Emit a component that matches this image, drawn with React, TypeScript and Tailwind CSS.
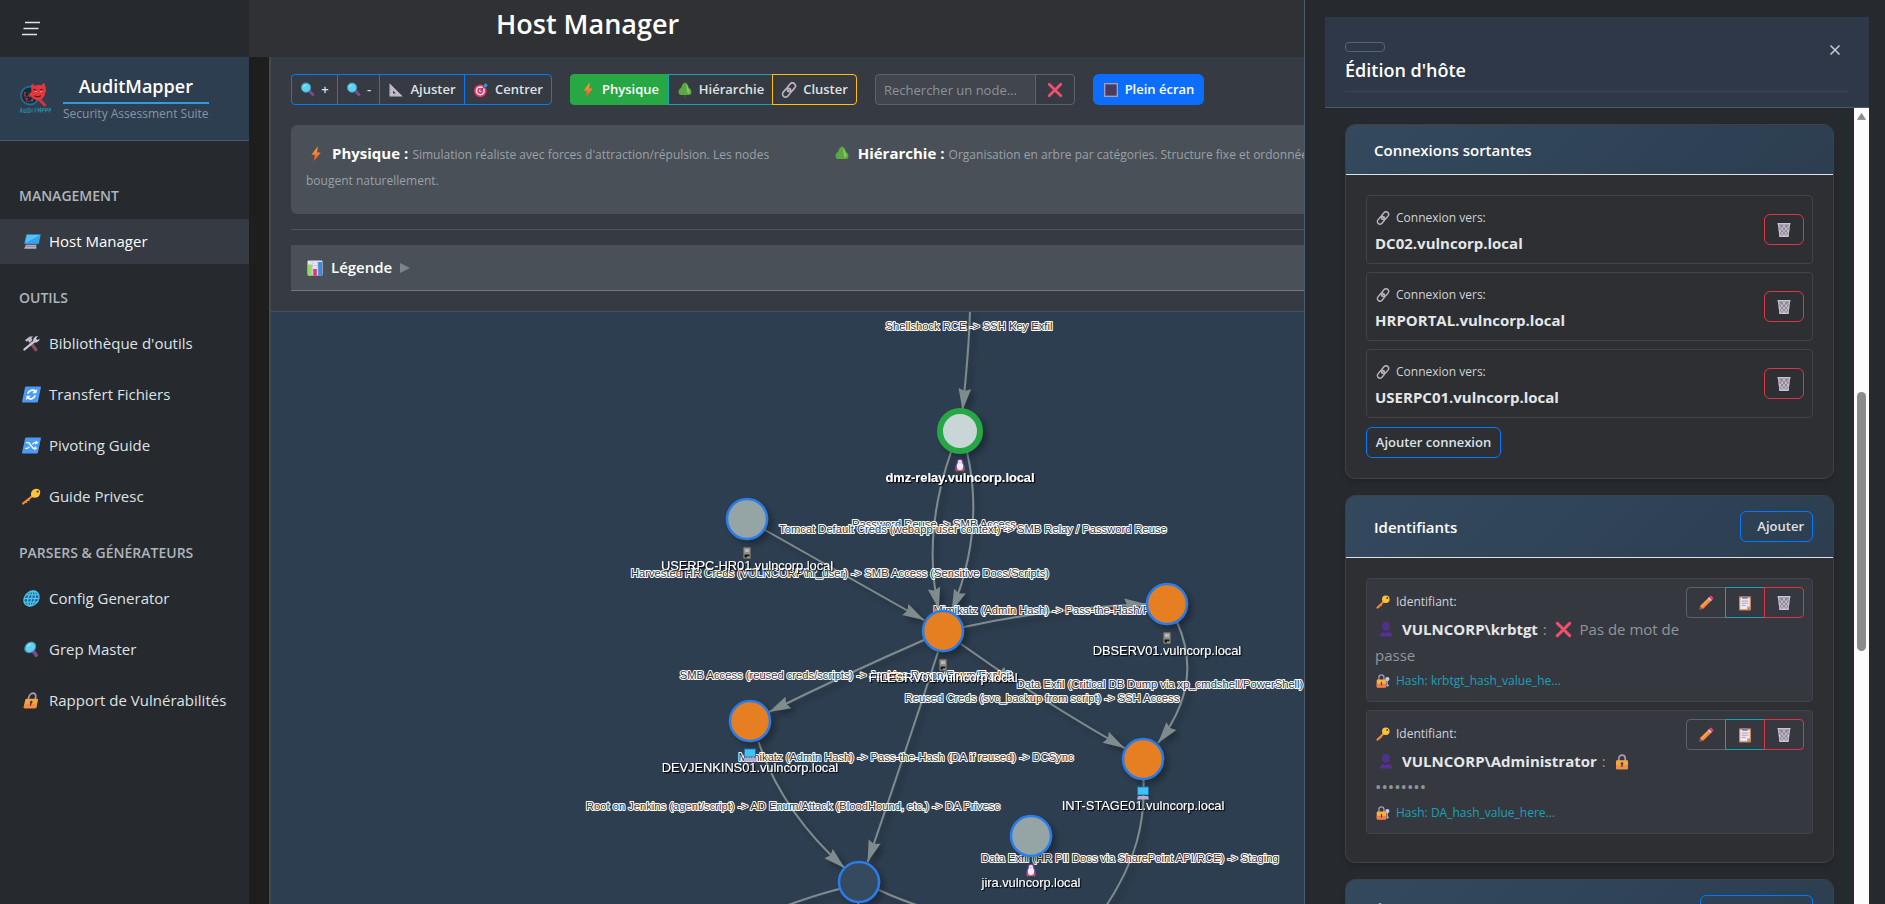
import React from "react";

type IconProps = { className?: string };

function Svg({ className = "size-4", children }: { className?: string; children: React.ReactNode }) {
  return (
    <svg viewBox="0 0 16 16" className={`${className} shrink-0`} fill="none" aria-hidden="true">
      {children}
    </svg>
  );
}

const Magnifier = ({ className }: IconProps) => (
  <Svg className={className}>
    <path d="M9.6 9.2l4.2 4.4" stroke="#7b4a8c" strokeWidth="3.2" strokeLinecap="round" />
    <circle cx="6.4" cy="6" r="5" fill="#5fd0ee" stroke="#3d8fb5" strokeWidth="1" />
    <path d="M3.8 5.2a2.8 2.8 0 0 1 2.4-2" stroke="#a9ecfb" strokeWidth="1" strokeLinecap="round" />
  </Svg>
);
const SetSquare = ({ className }: IconProps) => (
  <Svg className={className}>
    <path d="M1.5 1.2v13.3h13.3zM5 8.6l3 3H5z" fill="#c3bccb" fillRule="evenodd" />
    <path d="M1.5 4.5h1.4M1.5 7.5h1.4M1.5 10.5h1.4M6 14.4v-1.2M9 14.4v-1.2" stroke="#8d8598" strokeWidth=".7" />
  </Svg>
);
const Target = ({ className }: IconProps) => (
  <Svg className={className}>
    <circle cx="7.3" cy="8.8" r="6.4" fill="#e8315f" />
    <circle cx="7.3" cy="8.8" r="4.6" fill="#f5e9f1" />
    <circle cx="7.3" cy="8.8" r="3.1" fill="#e8315f" />
    <circle cx="7.3" cy="8.8" r="1.3" fill="#f5e9f1" />
    <path d="M7.3 8.8l5-5" stroke="#245fa6" strokeWidth="1.1" />
    <path d="M11 5V2.8L13.2.8v2h2l-2 2.2z" fill="#2b9bf0" />
  </Svg>
);
const Bolt = ({ className }: IconProps) => (
  <Svg className={className}>
    <defs>
      <linearGradient id="bolt" x1="0" y1="0" x2="0" y2="1">
        <stop offset="0" stopColor="#ffb02e" />
        <stop offset="1" stopColor="#f4442e" />
      </linearGradient>
    </defs>
    <path d="M9.8.5L3.4 8.8h3.5l-1.2 6.7 7-9H9z" fill="url(#bolt)" />
  </Svg>
);
const Tree = ({ className }: IconProps) => (
  <Svg className={className}>
    <path d="M7.3 11h1.6v4.6H7.3z" fill="#7a3b40" />
    <path d="M8 .6c2 .9 3.400 2.900 3.800 5.200 2.200 1.200 3.200 3.700 2.500 5.500-.5 1.300-1.500 1.800-2.800 1.800H4.500c-1.300 0-2.300-.5-2.800-1.800-.7-1.800.3-4.300 2.500-5.500C4.600 3.500 6 1.500 8 .6z" fill="#5ba843" />
    <path d="M9 2c1.300 1 2 2.800 2.100 4.500 1.800 1.200 2 4.500-.1 5.200C9.500 9 9.800 5.500 9 2z" fill="#85cf52" />
  </Svg>
);
const Link = ({ className }: IconProps) => (
  <Svg className={className}>
    <g transform="rotate(-50 8 8)" stroke="#b9b1bd" strokeWidth="1.7">
      <rect x="-.3" y="5" width="9.600" height="6" rx="3" />
      <rect x="6.700" y="5" width="9.600" height="6" rx="3" />
      <path d="M5.500 8h5" strokeWidth="1.300" />
    </g>
  </Svg>
);
const Cross = ({ className }: IconProps) => (
  <Svg className={className}>
    <path d="M2.200 2.200l11.600 11.600M13.800 2.200L2.200 13.800" stroke="#f0506e" strokeWidth="2.800" strokeLinecap="round" />
  </Svg>
);
const DarkSquare = ({ className }: IconProps) => (
  <Svg className={className}>
    <rect x="1.700" y="1.700" width="12.600" height="12.600" fill="#4a3a5c" stroke="#a99fc4" strokeWidth="1.300" />
  </Svg>
);
const BarChart = ({ className }: IconProps) => (
  <Svg className={className}>
    <rect x=".5" y=".5" width="15" height="15" rx="1" fill="#e8e2ee" />
    <path d="M.5 5.500h15M.5 10.500h15M5.500.500v15M10.500.500v15" stroke="#c3b9cf" strokeWidth=".5" />
    <path d="M1 4.500h3.800v11H1z" fill="#8fdc5c" />
    <path d="M6.200 9h3.600v6.500H6.200z" fill="#e8306f" />
    <path d="M11.200 2h3.800v13.500h-3.800z" fill="#2e8fe6" />
  </Svg>
);
const Laptop = ({ className }: IconProps) => (
  <Svg className={className}>
    <rect x="1.500" y="1" width="14" height="9.500" rx=".8" fill="#2f7fb8" />
    <rect x="2.300" y="1.800" width="12.400" height="7.900" fill="#54c2f6" />
    <path d="M2.300 9.700l12.400-7.900v7.900z" fill="#37a4ea" />
    <path d="M3.500 11h9.500l1 3.800H2.500z" fill="#b9b2c2" />
    <path d="M4 12.500h8.500" stroke="#837b8f" strokeWidth=".8" />
  </Svg>
);
const Tools = ({ className }: IconProps) => (
  <Svg className={className}>
    <path d="M6.500 6.500l7 7.500" stroke="#8a4f5e" strokeWidth="2.800" strokeLinecap="round" />
    <path d="M1.200 4.600L5 1.300h3.200L6.800 3l1.500 1.700-2.400 2.400-1.700-1.700-1.400 1z" fill="#bfb7c9" />
    <path d="M2.600 13.600l7.600-7.600" stroke="#cfc8d8" strokeWidth="2.200" strokeLinecap="round" />
    <path d="M14.800 3.500a3.300 3.300 0 0 1-5 3.100A3.300 3.300 0 0 1 12.700 1l-1.500 2 1.500 1.600z" fill="#cfc8d8" />
  </Svg>
);
const RefreshTile = ({ className }: IconProps) => (
  <Svg className={className}>
    <rect x=".5" y=".5" width="15" height="15" rx="1" fill="#4a9bf5" />
    <path d="M4.300 7.300A3.800 3.800 0 0 1 10.700 5M11.700 8.700A3.800 3.800 0 0 1 5.300 11" stroke="#fff" strokeWidth="1.700" />
    <path d="M12.300 2.800v4H8.300zM3.700 13.200v-4h4z" fill="#fff" />
  </Svg>
);
const ShuffleTile = ({ className }: IconProps) => (
  <Svg className={className}>
    <rect x=".5" y=".5" width="15" height="15" rx="1" fill="#4a9bf5" />
    <path d="M2.500 5.300h2.300l5.400 5.400h1.600M2.500 10.700h2.300l1.500-1.500M8.600 6.900l1.600-1.600h1.600" stroke="#fff" strokeWidth="1.300" />
    <path d="M11.200 3.300l2.800 2-2.800 2zM11.200 8.700l2.800 2-2.800 2z" fill="#fff" />
  </Svg>
);
const Key = ({ className }: IconProps) => (
  <Svg className={className}>
    <path d="M1.600 14.500L9 7.300" stroke="#f28b3c" strokeWidth="2.200" strokeLinecap="round" />
    <path d="M3.600 12.700l1.300 1.300M5.600 10.800l1.300 1.300" stroke="#f28b3c" strokeWidth="1.200" />
    <circle cx="11.200" cy="4.900" r="4.300" fill="#fcc23c" />
    <circle cx="12.800" cy="3.400" r="1.100" fill="#5c4320" />
  </Svg>
);
const Globe = ({ className }: IconProps) => (
  <Svg className={className}>
    <circle cx="8" cy="8" r="7" fill="#1d5f86" stroke="#4cc3f0" strokeWidth="1.300" />
    <ellipse cx="8" cy="8" rx="3.300" ry="7" stroke="#4cc3f0" strokeWidth="1.200" />
    <path d="M1 8h14M8 1v14M2.200 4.500h11.600M2.200 11.500h11.600" stroke="#4cc3f0" strokeWidth="1.200" />
  </Svg>
);
const Lock = ({ className }: IconProps) => (
  <Svg className={className}>
    <path d="M4.800 7V4.400a3.200 3.200 0 0 1 6.400 0V7" stroke="#a79ab0" strokeWidth="1.700" />
    <rect x="2" y="6.300" width="12" height="9" rx="1" fill="#f7a63e" />
    <path d="M2 11h12v3.300a1 1 0 0 1-1 1H3a1 1 0 0 1-1-1z" fill="#ee8f45" />
    <circle cx="8" cy="9.600" r="1.300" fill="#4b3550" />
    <path d="M7.400 10h1.200v3H7.400z" fill="#4b3550" />
  </Svg>
);
const LockWithKey = ({ className }: IconProps) => (
  <Svg className={className}>
    <path d="M12.800 7v7.500M12.800 13h2" stroke="#b5adc6" strokeWidth="1.500" />
    <circle cx="13" cy="5.800" r="2.400" fill="#cfc8dc" />
    <path d="M3.300 7V4a2.900 2.900 0 0 1 5.800 0v3" stroke="#a79ab0" strokeWidth="1.500" />
    <rect x=".8" y="6.300" width="10.800" height="9" rx="1" fill="#fbb03b" />
    <path d="M.8 11h10.800v3.300a1 1 0 0 1-1 1H1.800a1 1 0 0 1-1-1z" fill="#ef7d4b" />
    <path d="M5.600 9h1.300v4H5.600z" fill="#4b3550" />
  </Svg>
);
const Trash = ({ className }: IconProps) => (
  <Svg className={className}>
    <path d="M1.800 1.500h12.400l-1.700 13.300H3.500z" fill="#8b8595" />
    <path d="M1.500 1.800h13M3.400 14.300h9.200" stroke="#c9c3d1" strokeWidth="1.500" />
    <path d="M3 3.500l8.700 10M7 3l5.300 6.500M3 8l5.500 6M13 3.500l-8.700 10M9 3L3.700 9.500M13 8l-5.500 6M2.500 2.500l1.400 12M13.500 2.500l-1.400 12" stroke="#d5cfdd" strokeWidth=".8" />
  </Svg>
);
const Pencil = ({ className }: IconProps) => (
  <Svg className={className}>
    <path d="M1 15l1-4 3 3z" fill="#8c5a4a" />
    <path d="M2 11l7.800-7.800 3 3L5 14z" fill="#f9843c" />
    <path d="M2.900 12.200l8-8" stroke="#ffab5c" strokeWidth="1.200" />
    <path d="M9.800 3.200l1.200-1.200 3 3-1.200 1.200z" fill="#d9d3e2" />
    <path d="M11 2l1.100-1.100a1 1 0 0 1 1.400 0l1.600 1.600a1 1 0 0 1 0 1.400L14 5z" fill="#f0405e" />
  </Svg>
);
const Clipboard = ({ className }: IconProps) => (
  <Svg className={className}>
    <rect x="2" y="1.200" width="12" height="14.300" rx=".8" fill="#c98552" />
    <path d="M3.200 2.800h9.600v8.500L10 14.300H3.200z" fill="#ece7f2" />
    <path d="M12.800 11.300H10v3z" fill="#b3aac2" />
    <path d="M5.300 1h5.400v2.800H5.300z" fill="#857c92" />
    <path d="M4.700 6h6.600M4.700 8.200h6.600M4.700 10.400h4" stroke="#a59cb6" strokeWidth=".9" />
  </Svg>
);
const Person = ({ className }: IconProps) => (
  <Svg className={className}>
    <path d="M1.800 15.500c0-3.400 2.200-4.500 6.200-4.500s6.200 1.100 6.200 4.500z" fill="#56318e" />
    <path d="M6.300 8h3.400v4H6.300z" fill="#452673" />
    <rect x="4.200" y=".7" width="7.600" height="9" rx="3.600" fill="#50308a" />
  </Svg>
);

function Logo() {
  return (
    <svg viewBox="0 0 32 34" className="h-[34px] w-8 shrink-0" role="img" aria-label="AuditMapper">
      <circle cx="11" cy="14.500" r="9" fill="#182a3a" stroke="#1d6f8f" strokeWidth="1.800" />
      <path d="M5 13l3 3 3-4 3 7-6 2z" fill="none" stroke="#a82d38" strokeWidth=".9" />
      <circle cx="6" cy="12" r="1" fill="#c2323a" />
      <circle cx="8" cy="18" r="1" fill="#c2323a" />
      <circle cx="13" cy="19.500" r=".9" fill="#2a90ad" />
      <path d="M20 18l6.500 7" stroke="#d3343a" strokeWidth="3" />
      <path d="M12 4.500l1.500-2 2 2.200 4-1 3 .5 2.500-2.700 1.500 4.500 .5 4-1.500 5-3 3.500-4 1-4-1.500-2-2.500-2.500.5.500-3 2-2.500z" fill="#e0383c" />
      <path d="M14.500 8l3 1.500M23.500 8l-2.500 1.500M15.500 15l3.500.8 3-1" stroke="#5c1420" strokeWidth="1.200" fill="none" />
      <path d="M16 10.400h1.600M21.300 10.400h1.500" stroke="#ffd8c2" strokeWidth=".9" />
      <g fill="none" stroke="#2b7f98" strokeWidth="1.100">
        <path d="M1 31.500l1.200-4 1.200 4M5 27.500v4h2v-4M9 27.500v4h1.500l.8-2-.8-2zM13 27.500v4M15 28h2.500M16.200 28v3.500M19 31.500v-4l1.200 2 1.200-2v4M23 31.500v-4h1.800v2H23M26.500 31.500v-4h1.800v2h-1.800M30 31.500v-4h1.500v2H30" />
      </g>
    </svg>
  );
}

type IconType = (p: IconProps) => React.ReactElement;
const sections: { title: string; items: { label: string; icon: IconType; active?: boolean }[] }[] = [
  { title: "Management", items: [{ label: "Host Manager", icon: Laptop, active: true }] },
  {
    title: "Outils",
    items: [
      { label: "Bibliothèque d'outils", icon: Tools },
      { label: "Transfert Fichiers", icon: RefreshTile },
      { label: "Pivoting Guide", icon: ShuffleTile },
      { label: "Guide Privesc", icon: Key },
    ],
  },
  {
    title: "Parsers & Générateurs",
    items: [
      { label: "Config Generator", icon: Globe },
      { label: "Grep Master", icon: Magnifier },
      { label: "Rapport de Vulnérabilités", icon: Lock },
    ],
  },
];

function Sidebar() {
  return (
    <aside className="flex w-[249px] shrink-0 flex-col bg-[#26292d]">
      <div className="flex h-[57px] items-center px-5">
        <button type="button" aria-label="Menu" className="flex h-6 w-6 items-center">
          <svg viewBox="0 0 20 16" className="h-4 w-5" aria-hidden="true">
            <path d="M5 1.500h15M3.500 7.500h15M2 13.500h15" stroke="#e2e4e6" strokeWidth="1.700" />
          </svg>
        </button>
      </div>
      <div className="flex h-[84px] items-center gap-3 border-b border-[#46596c] bg-[#2d3e50] pb-0.5 pl-[19px]">
        <Logo />
        <div className="flex flex-col items-center">
          <span className="w-full border-b-2 border-[#3498db] pb-0.5 text-center text-[18px] leading-[28px] font-semibold text-white">
            AuditMapper
          </span>
          <span className="text-[12px] leading-[20px] text-[#8796a4]">Security Assessment Suite</span>
        </div>
      </div>
      <nav className="pt-[21px]">
        {sections.map((s) => (
          <div key={s.title}>
            <h2 className="px-[19px] pt-[23px] pb-3 text-[14px] leading-[22px] font-semibold text-[#adb5bd] uppercase">{s.title}</h2>
            <ul className="flex flex-col gap-1.5">
              {s.items.map(({ label, icon: Icon, active }) => (
                <li key={label}>
                  <a
                    href="#"
                    className={`flex h-[45px] items-center gap-[9px] pl-[23px] text-[15px] ${
                      active ? "bg-[#363a42] text-white" : "text-[#dee2e6]"
                    }`}
                  >
                    <span className="flex -skew-x-12">
                      <Icon className="size-[17px]" />
                    </span>
                    {label}
                  </a>
                </li>
              ))}
            </ul>
          </div>
        ))}
      </nav>
    </aside>
  );
}

const toolBtn = "flex h-[31px] items-center justify-center gap-1.5 border text-[13px] font-semibold text-[#dee2e6]";

function Toolbar() {
  return (
    <div className="flex items-center gap-[18px]">
      <div className="flex">
        <button type="button" className={`${toolBtn} w-[47px] rounded-l border-[#007bff]`}>
          <Magnifier className="size-[15px]" />+
        </button>
        <button type="button" className={`${toolBtn} -ml-px w-[43px] border-[#007bff]`}>
          <Magnifier className="size-[15px]" />-
        </button>
        <button type="button" className={`${toolBtn} -ml-px w-[86px] border-[#007bff]`}>
          <SetSquare className="size-4" />
          Ajuster
        </button>
        <button type="button" className={`${toolBtn} -ml-px w-[88px] rounded-r border-[#007bff]`}>
          <Target className="size-4" />
          Centrer
        </button>
      </div>
      <div className="flex">
        <button type="button" className={`${toolBtn} w-[99px] rounded-l border-[#28a745] bg-[#28a745] text-white`}>
          <Bolt className="size-4" />
          Physique
        </button>
        <button type="button" className={`${toolBtn} -ml-px w-[105px] border-[#17a2b8]`}>
          <Tree className="size-4" />
          Hiérarchie
        </button>
        <button type="button" className={`${toolBtn} -ml-px w-[85px] rounded-r border-[#ffc107]`}>
          <Link className="size-4" />
          Cluster
        </button>
      </div>
      <div className="flex">
        <input
          type="text"
          aria-label="Rechercher un node"
          placeholder="Rechercher un node..."
          className="h-[31px] w-[161px] rounded-l border border-[#5c636a] bg-[#41454d] px-2 text-[13px] text-[#dee2e6] placeholder:text-[#8b9299]"
        />
        <button
          type="button"
          aria-label="Effacer"
          className="-ml-px flex h-[31px] w-10 items-center justify-center rounded-r border border-[#5c636a]"
        >
          <Cross />
        </button>
      </div>
      <button
        type="button"
        className="flex h-[31px] w-[111px] items-center justify-center gap-1.5 rounded-md bg-[#0d6efd] text-[13px] font-semibold text-white"
      >
        <DarkSquare />
        Plein écran
      </button>
    </div>
  );
}

const modes: { name: string; icon: IconType; text: string }[] = [
  { name: "Physique", icon: Bolt, text: "Simulation réaliste avec forces d'attraction/répulsion. Les nodes bougent naturellement." },
  { name: "Hiérarchie", icon: Tree, text: "Organisation en arbre par catégories. Structure fixe et ordonnée." },
  { name: "Cluster", icon: Link, text: "Regroupement des nodes par catégorie." },
];

const ZOOM = 0.8;

const edges = [
  "M970 310Q969 350 962.500 410",
  "M951 452Q922 535 938.700 609",
  "M967 452Q985 530 951.700 611",
  "M765 530L924 620",
  "M964 627Q1050 608 1146 604",
  "M924 640Q846 674 769 712",
  "M938 652Q901 765 867.600 862",
  "M961 644Q1035 697 1124.400 748",
  "M1177 622C1194 660 1192 700 1158 743",
  "M758.500 742Q782 812 844.600 868",
];
const openEdges = [
  "M1143.500 780C1145 820 1138 860 1102 912",
  "M839 889Q812 896 780 908",
  "M879 890Q900 900 926 908",
  "M858 900V910",
];

const edgeLabels: { x: number; y: number; t: string }[] = [
  { x: 969, y: 326, t: "Shellshock RCE -> SSH Key Exfil" },
  { x: 934, y: 524, t: "Password Reuse -> SMB Access" },
  { x: 973, y: 529, t: "Tomcat Default Creds (webapp user context) -> SMB Relay / Password Reuse" },
  { x: 840, y: 573, t: "Harvested HR Creds (VULNCORP\\hr_user) -> SMB Access (Sensitive Docs/Scripts)" },
  { x: 1057, y: 610, t: "Mimikatz (Admin Hash) -> Pass-the-Hash/PsExec" },
  { x: 846, y: 675, t: "SMB Access (reused creds/scripts) -> Jenkins Recon/Enum/Exploit" },
  { x: 1160, y: 684, t: "Data Exfil (Critical DB Dump via xp_cmdshell/PowerShell)" },
  { x: 1042, y: 698, t: "Reused Creds (svc_backup from script) -> SSH Access" },
  { x: 906, y: 757, t: "Mimikatz (Admin Hash) -> Pass-the-Hash (DA if reused) -> DCSync" },
  { x: 793, y: 806, t: "Root on Jenkins (agent/script) -> AD Enum/Attack (BloodHound, etc.) -> DA Privesc" },
  { x: 1130, y: 858, t: "Data Exfil (HR PII Docs via SharePoint API/RCE) -> Staging" },
];

type Os = "linux" | "server" | "windows";
const nodes: { x: number; y: number; fill: string; label?: string; os?: Os; selected?: boolean }[] = [
  { x: 960, y: 431, fill: "#c8d6d8", label: "dmz-relay.vulncorp.local", os: "linux", selected: true },
  { x: 747, y: 519, fill: "#95a5a6", label: "USERPC-HR01.vulncorp.local", os: "server" },
  { x: 943, y: 631, fill: "#e67e22", label: "FILESRV01.vulncorp.local", os: "server" },
  { x: 1167, y: 604, fill: "#e67e22", label: "DBSERV01.vulncorp.local", os: "server" },
  { x: 750, y: 721, fill: "#e67e22", label: "DEVJENKINS01.vulncorp.local", os: "windows" },
  { x: 1143, y: 759, fill: "#e67e22", label: "INT-STAGE01.vulncorp.local", os: "windows" },
  { x: 1031, y: 836, fill: "#95a5a6", label: "jira.vulncorp.local", os: "linux" },
  { x: 859, y: 882, fill: "#34495e" },
];

function OsGlyph({ os }: { os: Os }) {
  if (os === "linux")
    return (
      <g>
        <path d="M-4.500 5.500c-1-3 .3-5 1.200-7.500 0-2.800 1-4 3.300-4s3.300 1.200 3.300 4c.9 2.500 2.200 4.500 1.200 7.500z" fill="#8a4bb0" />
        <ellipse cx="0" cy="1.500" rx="3.100" ry="4" fill="#f7ecfb" />
        <circle cx="0" cy="-3" r="2" fill="#f7ecfb" />
        <path d="M-1-2.800h2L0-1.400z" fill="#f08a1f" />
        <path d="M-4.200 5.500h3.400M.800 5.500H4.200" stroke="#e8531f" strokeWidth="1.400" />
      </g>
    );
  if (os === "server")
    return (
      <g>
        <rect x="-4" y="-6" width="8" height="12" rx=".8" fill="#8e8e8e" stroke="#3b3b3b" strokeWidth=".9" />
        <rect x="-2" y="-4" width="4" height="3" fill="#b8b8b8" />
        <path d="M-2.500 1.500h5v1.700h-2.500v1.300h-2.500z" fill="#161616" />
      </g>
    );
  return (
    <g>
      <rect x="-5.500" y="-6" width="11" height="8" fill="#3fc3f4" stroke="#1e6da8" strokeWidth=".8" />
      <path d="M-5 3H5l1 3.500H-6z" fill="#b7a9cf" />
    </g>
  );
}

function NetworkGraph() {
  return (
    <svg className="absolute inset-0 size-full" role="img" aria-label="Carte du réseau">
      <defs>
        <marker id="arrow" viewBox="-22 -7 22 14" refX="0" refY="0" markerWidth="22" markerHeight="14" markerUnits="userSpaceOnUse" orient="auto">
          <path d="M0 0L-21.500 6.300L-19 0L-21.500-6.300Z" fill="#7f8c8d" />
        </marker>
        <filter id="soft" x="-20%" y="-20%" width="150%" height="150%">
          <feDropShadow dx="4" dy="4" stdDeviation="3" floodColor="#000" floodOpacity=".32" />
        </filter>
        <filter id="labelShadow" x="-5%" y="-20%" width="110%" height="160%">
          <feDropShadow dx="1.500" dy="1.500" stdDeviation=".8" floodColor="#000" floodOpacity="1" />
        </filter>
      </defs>
      <g transform="translate(-271 -312)">
        <g filter="url(#soft)" stroke="#7f8c8d" strokeWidth="2" fill="none">
          {edges.map((d) => (
            <path key={d} d={d} markerEnd="url(#arrow)" />
          ))}
          {openEdges.map((d) => (
            <path key={d} d={d} />
          ))}
          <path d="M1008 675l-9-2 5-6z" fill="#7f8c8d" stroke="none" />
        </g>
        <g transform={`scale(${ZOOM})`} fontSize="14" textAnchor="middle" fontFamily="'Liberation Sans', Arial, sans-serif">
          {edgeLabels.map(({ x, y, t }) => (
            <text
              key={t}
              x={x / ZOOM}
              y={y / ZOOM}
              dy="5"
              fill="#343434"
              stroke="#fff"
              strokeWidth="2.500"
              strokeLinejoin="round"
              paintOrder="stroke"
            >
              {t}
            </text>
          ))}
        </g>
        <g filter="url(#soft)">
          {nodes.map((n) => (
            <circle
              key={n.x}
              cx={n.x}
              cy={n.y}
              r="20"
              fill={n.fill}
              stroke={n.selected ? "#28a745" : "#2b7ce9"}
              strokeWidth={n.selected ? 6 : 2.5}
            />
          ))}
        </g>
        {nodes.map((n) =>
          n.os ? (
            <g key={n.label} transform={`translate(${n.x} ${n.y + 34})`}>
              <OsGlyph os={n.os} />
            </g>
          ) : null,
        )}
        <g transform={`scale(${ZOOM})`} fontSize="16" textAnchor="middle" fill="#fff" filter="url(#labelShadow)" fontFamily="'Liberation Sans', Arial, sans-serif">
          {nodes.map((n) =>
            n.label ? (
              <text
                key={n.label}
                x={n.x / ZOOM}
                y={(n.y + 47) / ZOOM}
                dy="5"
                fontWeight={n.selected ? 700 : 400}
              >
                {n.label}
              </text>
            ) : null,
          )}
        </g>
      </g>
    </svg>
  );
}

function Main() {
  return (
    <div className="flex min-w-0 flex-1 flex-col">
      <header className="h-[57px] shrink-0 bg-[#303135] pt-1.5 pl-[247px]">
        <h1 className="text-[27px] leading-9 font-semibold text-white">Host Manager</h1>
      </header>
      <main className="mx-5 flex flex-1 flex-col border-l-2 border-[#464a50] bg-[#363a42]">
        <div className="border-b border-[#4b5057] px-5 pt-[17px] pb-5">
          <Toolbar />
          <div className="mt-5 grid h-[89px] grid-cols-3 gap-[38px] rounded-md bg-[#495057] pt-[15px] pl-[15px]">
            {modes.map(({ name, icon: Icon, text }) => (
              <p key={name} className="text-[12px] leading-[26px] text-[#9aa1a8]">
                <span className="mr-2 ml-0.5 inline-flex align-[-3px]">
                  <Icon className="size-4" />
                </span>
                <strong className="mr-px text-[15px] font-bold text-white">{name} :</strong> {text}
              </p>
            ))}
          </div>
          <hr className="mt-[15px] mb-[15px] border-[#4f545b]" />
          <button
            type="button"
            className="flex h-[46px] w-full items-center gap-2 border-b border-[#70767c] bg-[#495057] pl-4 text-[15px] font-semibold text-white"
          >
            <BarChart className="size-4" />
            Légende
            <svg viewBox="0 0 10 10" className="size-2.5" aria-hidden="true">
              <path d="M0 0l10 5-10 5z" fill="#7c848b" />
            </svg>
          </button>
        </div>
        <section className="relative flex-1 overflow-hidden bg-[#2d3e50]">
          <NetworkGraph />
        </section>
      </main>
    </div>
  );
}

function Card({ title, action, children }: { title: string; action?: React.ReactNode; children?: React.ReactNode }) {
  return (
    <section className="shrink-0 overflow-hidden rounded-[10px] border border-[#3e4247] bg-[#2d2f33] shadow-md">
      <header
        className={`flex items-center justify-between border-b border-[#dee2e6] bg-linear-135 from-[#34495e] to-[#2c3e50] pr-5 pl-7 ${
          action ? "h-[62px]" : "h-[50px]"
        }`}
      >
        <h3 className="pt-0.5 text-[15px] font-semibold text-white">{title}</h3>
        {action}
      </header>
      <div className="flex flex-col items-start gap-2 px-5 pt-5 pb-5">{children}</div>
    </section>
  );
}

const outlineBtn = "flex h-[31px] items-center rounded-md border border-[#007bff] px-2 text-[13px] font-semibold text-[#dee2e6]";

const hosts = ["DC02.vulncorp.local", "HRPORTAL.vulncorp.local", "USERPC01.vulncorp.local"];
const creds = [
  { user: "VULNCORP\\krbtgt", empty: true, hash: "krbtgt_hash_value_he..." },
  { user: "VULNCORP\\Administrator", empty: false, hash: "DA_hash_value_here..." },
];

function HostEditor() {
  return (
    <aside className="fixed inset-y-0 right-0 flex w-[581px] flex-col border-l border-[#4a5b6d] bg-[#26292d] pt-[17px] pr-4 pl-5">
      <header className="flex h-[91px] shrink-0 flex-col border-b border-[#4a5b6d] bg-[#2e3848] px-5 pt-[25px]">
        <div className="flex items-start justify-between">
          <div>
            <div className="h-2.5 w-10 rounded border border-[#566470]" />
            <h2 className="mt-1.5 text-[18px] leading-6 font-semibold text-white">Édition d'hôte</h2>
          </div>
          <button type="button" aria-label="Fermer" className="mt-0.5 mr-2 flex">
            <svg viewBox="0 0 12 12" className="size-3" aria-hidden="true">
              <path d="M1.500 1.500l9 9M10.500 1.500l-9 9" stroke="#c3c9d0" strokeWidth="1.600" />
            </svg>
          </button>
        </div>
        <hr className="mt-[9px] border-[#3d454d]" />
      </header>
      <div className="flex min-h-0 flex-1">
        <div className="flex min-w-0 flex-1 flex-col gap-4 overflow-hidden pt-4 pr-5 pl-5">
          <Card title="Connexions sortantes">
            {hosts.map((h) => (
              <div key={h} className="flex h-[69px] w-full items-center justify-between rounded border border-[#404449] px-2">
                <div className="pt-0.5">
                  <div className="flex items-center gap-1.5 text-[12px] leading-[26px] text-[#d0d4d8]">
                    <Link className="ml-px size-3.5" />
                    Connexion vers:
                  </div>
                  <div className="text-[15px] leading-[25px] font-bold text-[#e4e6e8]">{h}</div>
                </div>
                <button
                  type="button"
                  aria-label={`Supprimer la connexion vers ${h}`}
                  className="flex h-[31px] w-10 items-center justify-center rounded-md border border-[#dc3545]"
                >
                  <Trash className="size-4" />
                </button>
              </div>
            ))}
            <button type="button" className={`${outlineBtn} mt-px w-[135px] justify-center`}>
              Ajouter connexion
            </button>
          </Card>
          <Card
            title="Identifiants"
            action={
              <button type="button" className={`${outlineBtn} w-[73px] justify-end`}>
                Ajouter
              </button>
            }
          >
            {creds.map((c) => (
              <div key={c.user} className="flex h-[124px] w-full items-start justify-between rounded border border-[#404449] bg-[#363840] p-2">
                <div className="w-[316px] pt-px">
                  <div className="flex items-center gap-1.5 text-[12px] leading-7 text-[#d0d4d8]">
                    <Key className="ml-px size-3.5" />
                    Identifiant:
                  </div>
                  <div className="text-[15px] leading-[26px] text-[#8f969d]">
                    <span className="mr-2 ml-[3px] inline-flex align-[-2px]">
                      <Person className="size-4" />
                    </span>
                    <strong className="mr-px font-bold text-[#e4e6e8]">{c.user}</strong> :{" "}
                    <span className="mr-1 ml-1 inline-flex align-[-3px]">
                      {c.empty ? <Cross className="size-[17px]" /> : <Lock className="size-4" />}
                    </span>{" "}
                    {c.empty ? "Pas de mot de passe" : <span className="block text-[17px]">••••••••</span>}
                  </div>
                  <div className="flex items-center gap-1.5 text-[12px] leading-[26px] text-[#17a2b8]">
                    <LockWithKey className="ml-px size-3.5" />
                    Hash: {c.hash}
                  </div>
                </div>
                <div className="flex">
                  <button type="button" aria-label="Modifier" className="flex h-[31px] w-10 items-center justify-center rounded-l border border-[#5c636a]">
                    <Pencil className="size-4" />
                  </button>
                  <button type="button" aria-label="Copier" className="-ml-px flex h-[31px] w-10 items-center justify-center border border-[#17a2b8]">
                    <Clipboard className="size-4" />
                  </button>
                  <button type="button" aria-label="Supprimer" className="-ml-px flex h-[31px] w-10 items-center justify-center rounded-r border border-[#dc3545]">
                    <Trash className="size-4" />
                  </button>
                </div>
              </div>
            ))}
            <div />
          </Card>
          <Card
            title="Étapes"
            action={
              <button type="button" className={`${outlineBtn} w-[113px] justify-end`}>
                Ajouter étape
              </button>
            }
          />
        </div>
        <div className="flex w-[15px] flex-col items-center bg-[#fcfcfc] pt-[5px]" aria-hidden="true">
          <svg viewBox="0 0 9 7" className="h-[7px] w-[9px]">
            <path d="M4.500.3L8.700 6.700H.3z" fill="#8b8b8b" stroke="#8b8b8b" strokeWidth=".6" strokeLinejoin="round" />
          </svg>
          <div className="mt-[272px] h-[259px] w-[9px] rounded-full bg-[#8b8b8b]" />
        </div>
      </div>
    </aside>
  );
}

export default function App() {
  return (
    <div className="flex h-screen overflow-hidden bg-[#1e1e1e] font-['Open_Sans','Noto_Sans',sans-serif] text-[#dee2e6]">
      <Sidebar />
      <Main />
      <HostEditor />
    </div>
  );
}
